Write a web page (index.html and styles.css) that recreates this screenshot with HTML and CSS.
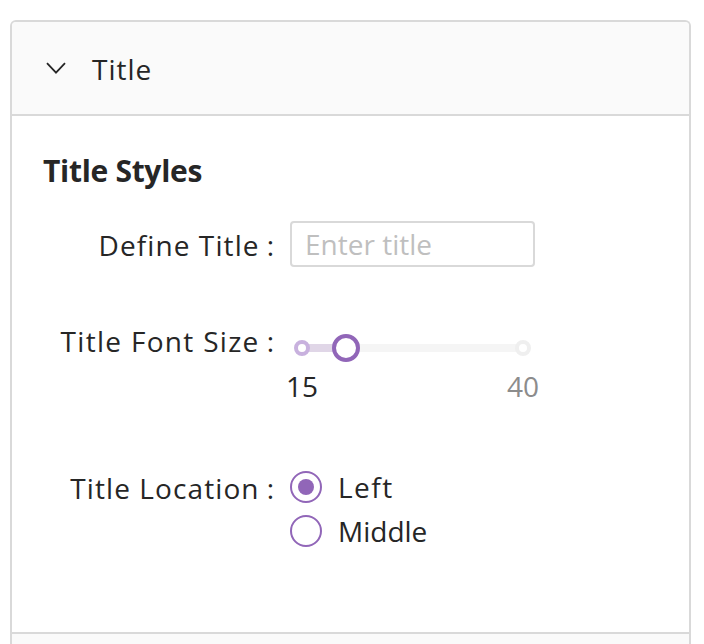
FILE: index.html
```html
<!DOCTYPE html>
<html lang="en">
<head>
<meta charset="utf-8">
<title>Title settings</title>
<link rel="stylesheet" href="styles.css">
</head>
<body>
<div class="collapse">
  <div class="panel-header">
    <svg class="arrow" width="20" height="12" viewBox="0 0 20 12" aria-hidden="true"><polyline points="1,1.2 10,10.6 19,1.2" fill="none" stroke="#262626" stroke-width="1.8"/></svg>
    <span class="panel-title">Title</span>
  </div>
  <div class="panel-content">
    <h3 class="section-title">Title Styles</h3>
    <div class="form-row row-input">
      <label class="form-label">Define Title</label>
      <div class="form-control"><input class="text-input" type="text" placeholder="Enter title"></div>
    </div>
    <div class="form-row row-slider">
      <label class="form-label label-wide">Title Font Size</label>
      <div class="form-control">
        <div class="slider">
          <div class="rail"></div>
          <div class="track" style="width:20%"></div>
          <span class="dot dot-active" style="left:0%"></span>
          <span class="dot" style="left:100%"></span>
          <span class="handle" style="left:20%"></span>
        </div>
        <div class="marks">
          <span class="mark mark-active" style="left:0%">15</span>
          <span class="mark" style="left:100%">40</span>
        </div>
      </div>
    </div>
    <div class="form-row row-radio">
      <label class="form-label label-radio">Title Location</label>
      <div class="form-control radio-group">
        <label class="radio"><span class="radio-circle checked"><span class="radio-dot"></span></span><span class="radio-text radio-text-wide">Left</span></label>
        <label class="radio"><span class="radio-circle"></span><span class="radio-text">Middle</span></label>
      </div>
    </div>
  </div>
  <div class="next-header"></div>
</div>
</body>
</html>
```

FILE: styles.css
```css
html, body {
  margin: 0;
  padding: 0;
  background: #ffffff;
}

body {
  font-family: "Open Sans", "Noto Sans", sans-serif;
  color: #262626;
}

.collapse {
  margin: 20px 13px 0 10px;
  border: 2px solid #d9d9d9;
  border-bottom: 0;
  border-radius: 6px 6px 0 0;
  background: #fafafa;
  overflow: hidden;
}

.panel-header {
  height: 92px;
  box-sizing: border-box;
  padding: 0 32px 0 34px;
  display: flex;
  align-items: center;
  background: #fafafa;
  font-size: 28px;
  line-height: 44px;
}

.arrow {
  display: block;
  flex: none;
}

.panel-title {
  margin-left: 26px;
  padding-top: 2px;
  letter-spacing: 1px;
}

.panel-content {
  background: #ffffff;
  border-top: 2px solid #d9d9d9;
  height: 518px;
  box-sizing: border-box;
  padding: 36px 32px 0;
}

.section-title {
  margin: 0 0 31px -1px;
  font-size: 30px;
  line-height: 38px;
  font-weight: 700;
  letter-spacing: -0.3px;
}

.form-row {
  display: grid;
  grid-template-columns: 246px 245px;
  align-items: start;
}

.form-label {
  display: block;
  text-align: right;
  font-size: 28px;
  line-height: 46px;
  padding-top: 1px;
  white-space: nowrap;
  letter-spacing: 1.1px;
}

.label-wide {
  letter-spacing: 1.3px;
}

.form-label::after {
  content: ":";
  margin: 0 16px 0 7px;
  letter-spacing: 0;
}

.label-radio {
  padding-top: 0;
  margin-top: -1px;
}

.row-input {
  margin-bottom: 49px;
}

.row-slider {
  margin-bottom: 58px;
}

.text-input {
  display: block;
  width: 245px;
  height: 46px;
  box-sizing: border-box;
  border: 2px solid #d9d9d9;
  border-radius: 4px;
  padding: 0 13px;
  font-family: inherit;
  font-size: 28px;
  color: #262626;
  background: #ffffff;
  outline: none;
}

.text-input::placeholder {
  color: #bfbfbf;
}

.slider {
  position: relative;
  height: 24px;
  margin: 19px 12px 0;
}

.rail,
.track {
  position: absolute;
  top: 8px;
  height: 8px;
  left: 0;
  border-radius: 4px;
}

.rail {
  right: 0;
  background: #f5f5f5;
}

.track {
  background: #e0d6e7;
}

.dot {
  position: absolute;
  top: 4px;
  width: 16px;
  height: 16px;
  margin-left: -8px;
  box-sizing: border-box;
  border: 4px solid #efefef;
  border-radius: 50%;
  background: #ffffff;
}

.dot-active {
  border-color: #c8b1de;
}

.handle {
  position: absolute;
  top: -2px;
  width: 28px;
  height: 28px;
  margin-left: -14px;
  box-sizing: border-box;
  border: 4px solid #9166b8;
  border-radius: 50%;
  background: #ffffff;
}

.marks {
  position: relative;
  height: 44px;
  margin: 4px 12px 0;
}

.mark {
  position: absolute;
  top: 0;
  transform: translateX(-50%);
  font-size: 28px;
  line-height: 44px;
  color: #8c8c8c;
}

.mark-active {
  color: #262626;
}

.radio-group {
  display: flex;
  flex-direction: column;
  margin-top: -1px;
}

.radio {
  display: flex;
  align-items: center;
  height: 44px;
  font-size: 28px;
  line-height: 44px;
}

.radio-circle {
  width: 32px;
  height: 32px;
  box-sizing: border-box;
  border: 2px solid #9166b8;
  border-radius: 50%;
  display: flex;
  align-items: center;
  justify-content: center;
  flex: none;
  background: #ffffff;
}

.radio-dot {
  width: 16px;
  height: 16px;
  border-radius: 50%;
  background: #9166b8;
}

.radio-text {
  padding: 0 16px;
}

.radio-text-wide {
  letter-spacing: 1.5px;
}

.next-header {
  height: 10px;
  border-top: 2px solid #d9d9d9;
  background: #fafafa;
}
```
